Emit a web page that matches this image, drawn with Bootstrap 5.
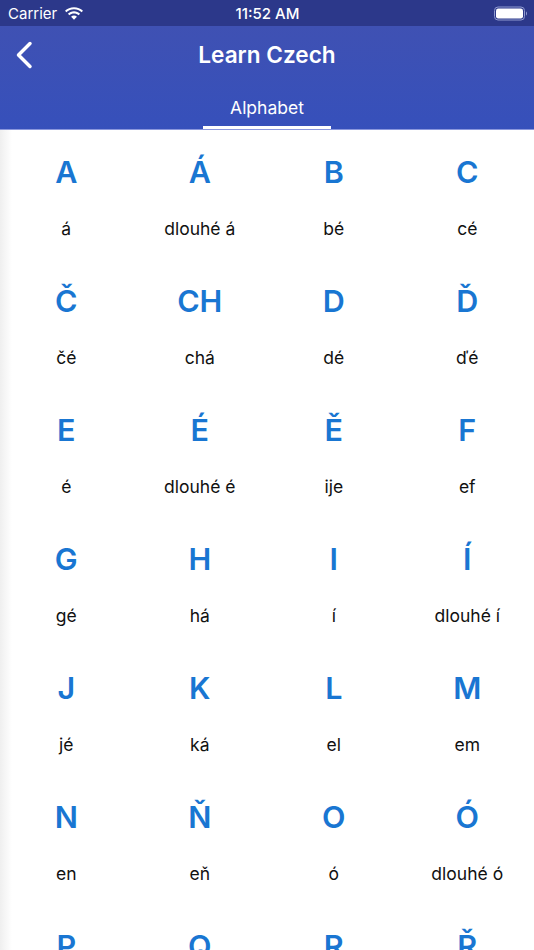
<!doctype html>
<html lang="cs"><head><meta charset="utf-8">
<link href="https://cdn.jsdelivr.net/npm/bootstrap@5.3.0/dist/css/bootstrap.min.css" rel="stylesheet">
<style>
html,body{height:950px;overflow:hidden;background:#fff}
body{font-family:Inter,"Noto Sans",sans-serif}
.status-strip{height:26px;background:#2c388a;color:#fff;font-size:15px;padding:0 7px 0 8px;line-height:27px}
.status-time{font-size:15px;font-weight:500}
.status-side{flex:1 1 0}
.wifi-icon{margin-left:4px}
.head-area{height:104px;background:linear-gradient(#3f51b3,#3650bb);color:#fff;box-shadow:inset 0 -1px 0 #8a97dd}
.title-row{height:57px}
.back-icon{left:15px;top:14px}
.app-title{font-size:22.6px;font-weight:600;line-height:56px;flex:1;text-align:center}
.tab-item{width:128px;height:46px;color:#fff;font-size:17.5px;line-height:50px;text-align:center;border-bottom:3px solid #fff;margin:0 auto}
.alpha-body{height:820px;overflow:hidden;background:linear-gradient(90deg,#efefef,#fff 12px)}
.alpha-grid{display:grid;grid-template-columns:132.5px 134.5px 133.5px 133.5px}
.alpha-cell{height:129px;text-align:center}
.alpha-letter{color:#1976d2;font-size:30.5px;font-weight:600;line-height:35px;padding-top:24px}
.alpha-name{color:#111;font-size:17.5px;line-height:22px;margin-top:29px}
</style></head>
<body>
<div class="status-strip d-flex align-items-center">
  <div class="status-side d-flex align-items-center gap-1"><span>Carrier</span>
    <svg class="wifi-icon" width="18" height="13" viewBox="1 .8 16 11.200" fill="#fff"><path d="M9 2.600c2.600 0 5 1 6.800 2.700l1.200-1.300C14.900 2 12.100.8 9 .8S3.100 2 1 4l1.200 1.300C4 3.600 6.400 2.600 9 2.600z"/><path d="M9 6.300c1.600 0 3 .6 4.100 1.600l1.300-1.300C13 5.200 11.100 4.400 9 4.400s-4 .8-5.400 2.200l1.300 1.300C6 6.900 7.400 6.300 9 6.300z"/><path d="M9 8.200c-1 0-1.900.4-2.600 1L9 12l2.600-2.800c-.7-.6-1.600-1-2.600-1z"/></svg>
  </div>
  <div class="status-time">11:52 AM</div>
  <div class="status-side d-flex justify-content-end">
    <svg width="33" height="15" viewBox="0 0 33 15"><rect x=".5" y="1" width="30" height="13" rx="3.500" fill="none" stroke="#8f9ad0"/><rect x="2" y="2.500" width="27" height="10" rx="2.200" fill="#fff"/><path d="M32 5.500c.6.300 1 1 1 2s-.4 1.700-1 2z" fill="#8f9ad0"/></svg>
  </div>
</div>
<div class="head-area">
  <div class="title-row d-flex align-items-center position-relative">
    <svg class="back-icon position-absolute" width="19" height="30" viewBox="0 0 19 30"><path d="M15 3.500 3.500 15 15 26.500" fill="none" stroke="#fff" stroke-width="3.500" stroke-linecap="round" stroke-linejoin="round"/></svg>
    <div class="app-title">Learn Czech</div>
  </div>
  <div class="tab-item">Alphabet</div>
</div>
<div class="alpha-body">
  <div class="alpha-grid" id="g"></div>
</div>
<script>
var d=[["A","á"],["Á","dlouhé á"],["B","bé"],["C","cé"],["Č","čé"],["CH","chá"],["D","dé"],["Ď","ďé"],["E","é"],["É","dlouhé é"],["Ě","ije"],["F","ef"],["G","gé"],["H","há"],["I","í"],["Í","dlouhé í"],["J","jé"],["K","ká"],["L","el"],["M","em"],["N","en"],["Ň","eň"],["O","ó"],["Ó","dlouhé ó"],["P",""],["Q",""],["R",""],["Ř",""]];
document.getElementById('g').innerHTML=d.map(function(x){return '<div class="alpha-cell"><div class="alpha-letter">'+x[0]+'</div><div class="alpha-name">'+x[1]+'</div></div>'}).join('');
</script>
<script src="https://cdn.jsdelivr.net/npm/bootstrap@5.3.0/dist/js/bootstrap.bundle.min.js"></script>
</body></html>
